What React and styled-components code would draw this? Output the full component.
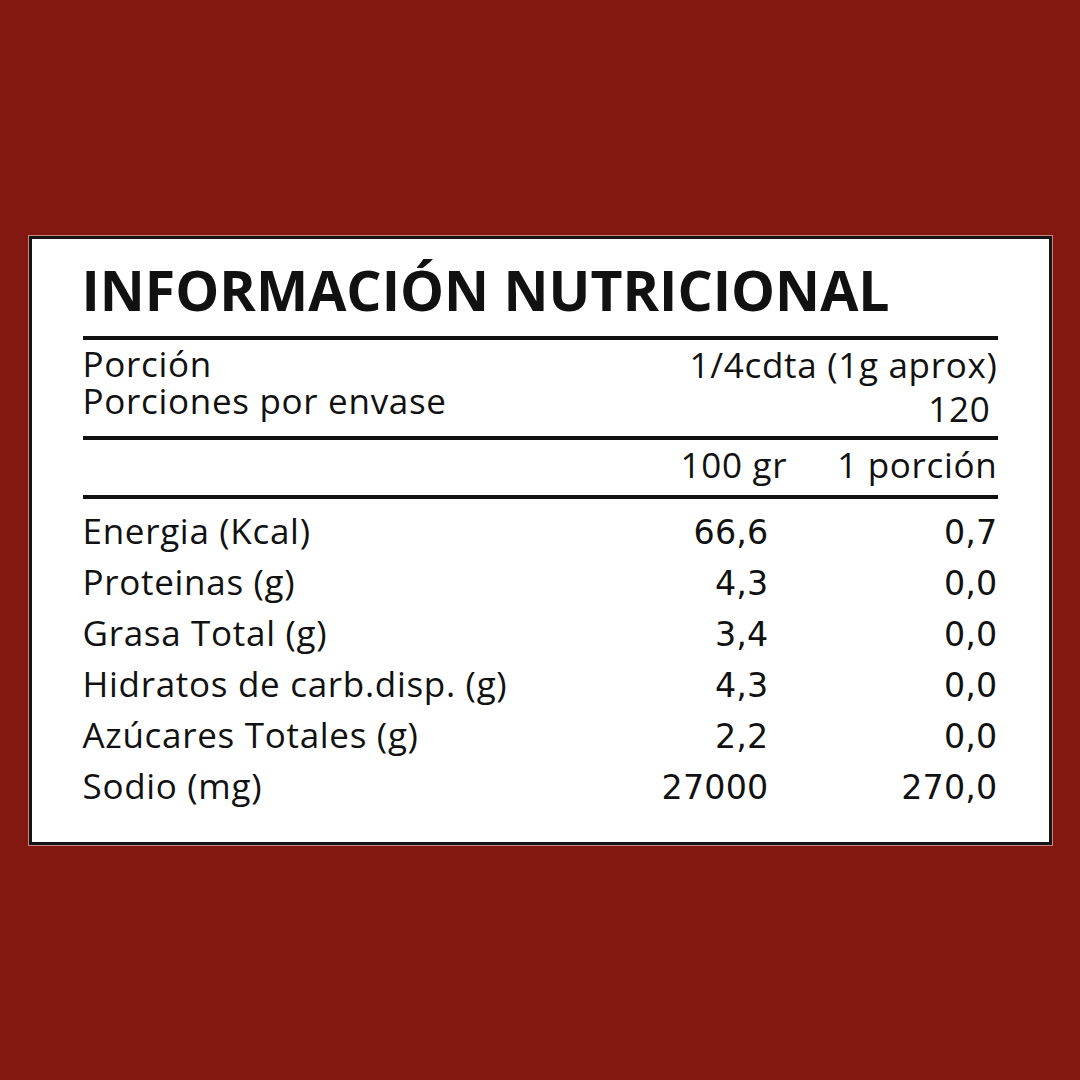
import styled, { createGlobalStyle } from "styled-components";

const GlobalStyle = createGlobalStyle`
  html, body {
    margin: 0;
    padding: 0;
    background: #831811;
  }
  body {
    font-family: "Open Sans", "Liberation Sans", sans-serif;
    color: #111;
  }
`;

const Page = styled.div`
  width: 100%;
  height: 100vh;
  display: flex;
  align-items: center;
  justify-content: center;
`;

const Label = styled.div`
  box-sizing: border-box;
  width: 1023px;
  background: #fff;
  border: 3px solid #151515;
  box-shadow: 0 0 0 1px rgba(255, 225, 225, 0.55);
  padding: 21px 51px 31px 51px;
  display: flex;
  flex-direction: column;
`;

const Title = styled.h1`
  margin: 0 0 0 -1px;
  font-family: "Open Sans", sans-serif;
  font-weight: 700;
  font-size: 55.4px;
  line-height: 60px;
  letter-spacing: 0;
`;

const Rule = styled.div`
  height: 4px;
  background: #111;
  margin-top: ${(p) => p.gap}px;
`;

const ServingSection = styled.div`
  display: flex;
  justify-content: space-between;
  align-items: flex-start;
  font-size: 35px;
  letter-spacing: 0.7px;
`;

const ServingLabels = styled.div`
  padding-top: 5px;
  line-height: 37px;
`;

const ServingValues = styled.div`
  padding-top: 3px;
  line-height: 44px;
  text-align: right;
`;

const ServingValue = styled.div`
  padding-right: ${(p) => p.inset || 0}px;
`;

const ColumnHeads = styled.div`
  display: flex;
  justify-content: flex-end;
  gap: 50px;
  font-size: 35px;
  letter-spacing: 0.7px;
  line-height: 50px;
`;

const Rows = styled.div`
  padding-top: 6px;
`;

const Row = styled.div`
  display: grid;
  grid-template-columns: 1fr 180px 229px;
  align-items: start;
  height: 51px;
  font-size: 35px;
  letter-spacing: 0.7px;
  line-height: 51px;
`;

const Value = styled.span`
  font-family: "DejaVu Sans", "Verdana", sans-serif;
  font-size: 33.3px;
  letter-spacing: 0.2px;
  line-height: 46px;
  padding-top: 5px;
  text-align: right;
`;

const rows = [
  ["Energia (Kcal)", "66,6", "0,7"],
  ["Proteinas (g)", "4,3", "0,0"],
  ["Grasa Total (g)", "3,4", "0,0"],
  ["Hidratos de carb.disp. (g)", "4,3", "0,0"],
  ["Azúcares Totales (g)", "2,2", "0,0"],
  ["Sodio (mg)", "27000", "270,0"],
];

export default function App() {
  return (
    <>
      <GlobalStyle />
      <Page>
        <Label>
          <Title>INFORMACIÓN NUTRICIONAL</Title>
          <Rule gap={16} />
          <ServingSection>
            <ServingLabels>
              <div>Porción</div>
              <div>Porciones por envase</div>
            </ServingLabels>
            <ServingValues>
              <ServingValue>1/4cdta (1g aprox)</ServingValue>
              <ServingValue inset={7}>120</ServingValue>
            </ServingValues>
          </ServingSection>
          <Rule gap={5} />
          <ColumnHeads>
            <span>100 gr</span>
            <span>1 porción</span>
          </ColumnHeads>
          <Rule gap={5} />
          <Rows>
            {rows.map(([name, per100, perPortion]) => (
              <Row key={name}>
                <span>{name}</span>
                <Value>{per100}</Value>
                <Value>{perPortion}</Value>
              </Row>
            ))}
          </Rows>
        </Label>
      </Page>
    </>
  );
}
